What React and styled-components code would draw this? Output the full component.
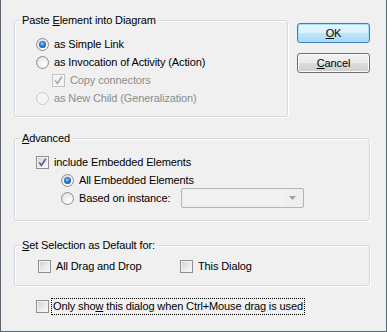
import React from 'react';
import styled, { createGlobalStyle } from 'styled-components';

const GlobalStyle = createGlobalStyle`
  html, body {
    margin: 0;
    padding: 0;
    background: #f0f0f0;
  }
  body {
    font-family: "Liberation Sans", Arial, sans-serif;
    font-size: 11px;
    letter-spacing: -0.12px;
    color: #000;
  }
`;

const Dialog = styled.div`
  box-sizing: border-box;
  width: 387px;
  height: 332px;
  background: #f0f0f0;
  border: 1px solid #5b6570;
  border-top: none;
  padding: 14px 0 0 13px;
  display: flex;
  flex-direction: column;
`;

const TopRow = styled.div`
  display: flex;
  align-items: flex-start;
`;

const Group = styled.fieldset`
  box-sizing: border-box;
  margin: ${p => p.$mt || 0}px 0 0 0;
  width: ${p => p.$width}px;
  padding: ${p => p.$pt}px 0 ${p => p.$pb}px ${p => p.$pl}px;
  border: 1px solid #d5d9dc;
  border-radius: 3px;
  box-shadow: inset 1px 1px 0 #fff, 1px 1px 0 #fff;
  min-inline-size: 0;
`;

const Legend = styled.legend`
  margin-left: ${p => 5 - p.$pl}px;
  padding: 0 2px;
  line-height: 13px;
  background: #f0f0f0;
`;

const Row = styled.div`
  display: flex;
  align-items: center;
  height: 18px;
  padding-left: ${p => p.$indent || 0}px;
`;

const Option = styled.label`
  display: flex;
  align-items: center;
  gap: ${p => p.$gap || 3}px;
  width: ${p => (p.$width ? `${p.$width}px` : 'auto')};
  color: ${p => (p.$disabled ? '#8d8d8d' : '#000')};
  white-space: nowrap;
`;

const RadioMark = styled.span`
  box-sizing: border-box;
  flex: none;
  width: 13px;
  height: 13px;
  border-radius: 50%;
  border: 1px solid ${p => (p.$disabled ? '#c8cacb' : '#8e8f8f')};
  background: ${p =>
    p.$disabled
      ? '#f4f4f4'
      : 'radial-gradient(circle at 65% 70%, #ffffff 0%, #ececec 55%, #d2d2d2 100%)'};
  display: flex;
  align-items: center;
  justify-content: center;
  &::after {
    content: '';
    display: ${p => (p.$checked ? 'block' : 'none')};
    width: 7px;
    height: 7px;
    border-radius: 50%;
    background: radial-gradient(circle at 45% 40%, #9fd8fb 0%, #2f7ad2 40%, #0e3a8c 100%);
  }
`;

const CheckMark = styled.span`
  box-sizing: border-box;
  flex: none;
  width: 13px;
  height: 13px;
  border: 1px solid ${p => (p.$disabled ? '#c2c2c2' : '#8f8f8f')};
  box-shadow: inset 0 0 0 1px #f4f4f4;
  background: ${p =>
    p.$disabled
      ? '#f3f3f3'
      : 'linear-gradient(135deg, #cdcdcd 0%, #e6e6e6 45%, #fbfbfb 100%)'};
  display: flex;
  align-items: center;
  justify-content: center;
`;

const Text = styled.span`
  line-height: 13px;
  padding: 1px;
  border: 1px ${p => (p.$focus ? 'dotted #000' : 'solid transparent')};
`;

const Buttons = styled.div`
  display: flex;
  flex-direction: column;
  gap: 10px;
  margin: 9px 0 0 9px;
`;

const Button = styled.button`
  box-sizing: border-box;
  width: 73px;
  height: 20px;
  padding: 0;
  font: inherit;
  letter-spacing: inherit;
  color: #000;
  border-radius: 3px;
  border: 1px solid ${p => (p.$default ? '#3c7fb1' : '#707070')};
  box-shadow: inset 0 0 0 1px ${p => (p.$default ? '#9fe0fa' : '#fbfbfb')};
  background: ${p =>
    p.$default
      ? 'linear-gradient(#eaf6fd 0%, #d9f0fc 50%, #bee6fd 50%, #a7d9f5 100%)'
      : 'linear-gradient(#f2f2f2 0%, #ebebeb 50%, #dddddd 50%, #cfcfcf 100%)'};
`;

const Combo = styled.div`
  box-sizing: border-box;
  width: 123px;
  height: 20px;
  border: 1px solid #b4b4b4;
  border-radius: 2px;
  background: #efefef;
  display: flex;
  align-items: center;
  padding: 2px;
`;

const ComboField = styled.div`
  flex: 1;
  height: 100%;
  background: #f2f2f2;
`;

const ComboArrow = styled.div`
  width: 17px;
  display: flex;
  justify-content: center;
  align-items: center;
`;

const GroupRow = styled.div`
  display: flex;
  align-items: center;
  height: 18px;
`;

const FooterRow = styled.div`
  display: flex;
  align-items: center;
  height: 18px;
  margin-top: 11px;
  padding-left: 22px;
`;

const Radio = ({ checked, disabled, children, width }) => (
  <Option $disabled={disabled} $gap={3} $width={width}>
    <RadioMark $checked={checked} $disabled={disabled} />
    <Text>{children}</Text>
  </Option>
);

const Check = ({ checked, disabled, children, width, focus }) => (
  <Option $disabled={disabled} $gap={focus ? 2 : 3} $width={width}>
    <CheckMark $disabled={disabled}>
      {checked && (
        <svg width="9" height="9" viewBox="0 0 9 9">
          <path
            d="M1.2 4.4 L3.4 7.4 L7.8 0.8"
            fill="none"
            stroke={disabled ? '#a6a6a6' : '#4a5d8e'}
            strokeWidth="1.6"
          />
        </svg>
      )}
    </CheckMark>
    <Text $focus={focus}>{children}</Text>
  </Option>
);

const Box = ({ title, width, mt, pt, pb, pl = 21, children }) => (
  <Group $width={width} $mt={mt} $pt={pt} $pb={pb} $pl={pl}>
    <Legend $pl={pl}>{title}</Legend>
    {children}
  </Group>
);

export default function App() {
  return (
    <>
      <GlobalStyle />
      <Dialog>
        <TopRow>
          <Box
            width={274}
            pt={8}
            pb={9}
            title={<>Paste <u>E</u>lement into Diagram</>}
          >
            <Row>
              <Radio checked>as Simple Link</Radio>
            </Row>
            <Row>
              <Radio>as Invocation of Activity (Action)</Radio>
            </Row>
            <Row $indent={16}>
              <Check checked disabled>
                Copy connectors
              </Check>
            </Row>
            <Row>
              <Radio disabled>as New Child (Generalization)</Radio>
            </Row>
          </Box>
          <Buttons>
            <Button $default>
              <u>O</u>K
            </Button>
            <Button>
              <u>C</u>ancel
            </Button>
          </Buttons>
        </TopRow>

        <Box width={356} mt={15} pt={8} pb={13} title={<><u>A</u>dvanced</>}>
          <Row>
            <Check checked>include Embedded Elements</Check>
          </Row>
          <Row $indent={25}>
            <Radio checked>All Embedded Elements</Radio>
          </Row>
          <Row $indent={25}>
            <Radio width={120}>Based on instance:</Radio>
            <Combo>
              <ComboField />
              <ComboArrow>
                <svg width="7" height="4" viewBox="0 0 7 4">
                  <path d="M0 0 H7 L3.5 4 Z" fill="#a2a2a2" />
                </svg>
              </ComboArrow>
            </Combo>
          </Row>
        </Box>

        <Box
          width={356}
          mt={18}
          pt={5}
          pb={10}
          pl={23}
          title={<><u>S</u>et Selection as Default for:</>}
        >
          <GroupRow>
            <Check width={142}>All Drag and Drop</Check>
            <Check>This Dialog</Check>
          </GroupRow>
        </Box>

        <FooterRow>
          <Check focus>
            Only sho<u>w</u> this dialog when Ctrl+Mouse drag is used
          </Check>
        </FooterRow>
      </Dialog>
    </>
  );
}
